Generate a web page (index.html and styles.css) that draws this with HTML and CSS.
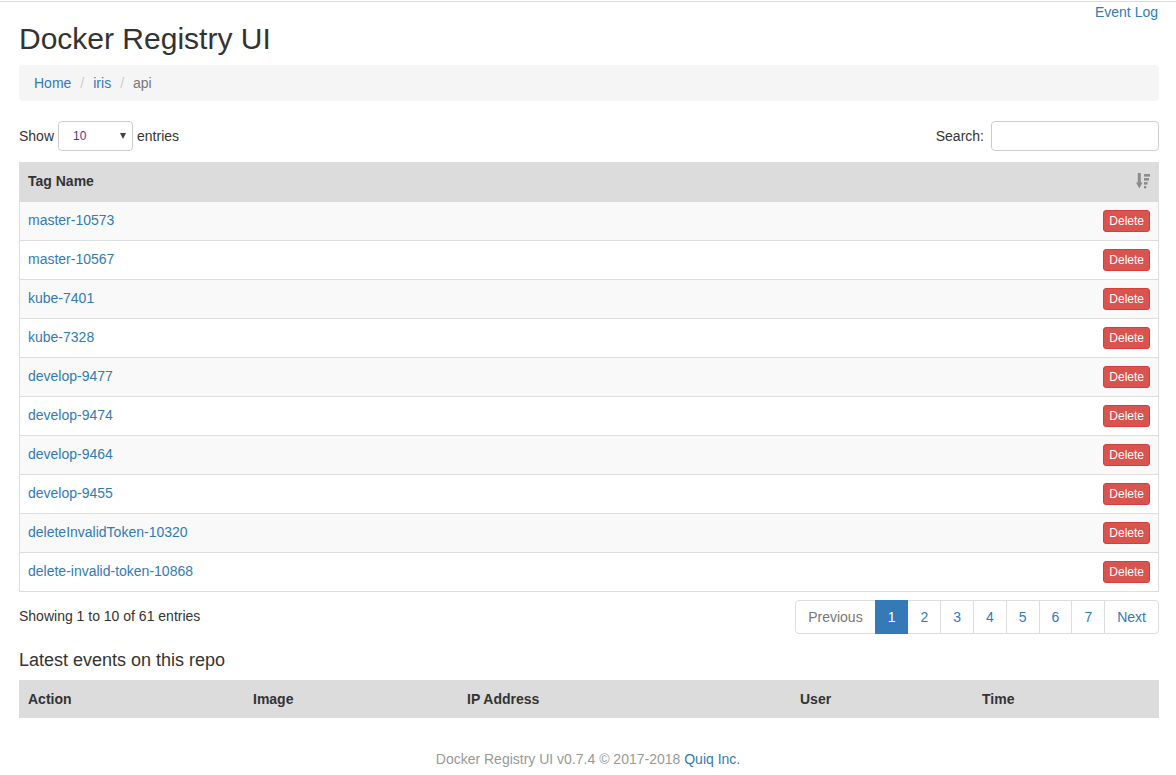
FILE: index.html
```html
<!DOCTYPE html>
<html>
<head>
<meta charset="utf-8">
<title>Docker Registry UI</title>
<link rel="stylesheet" href="styles.css">
</head>
<body>
<div class="topline"></div>
<div class="page">
  <div class="topbar"><a href="#">Event Log</a></div>
  <h2 class="title">Docker Registry UI</h2>
  <ol class="breadcrumb">
    <li><a href="#">Home</a></li>
    <li class="sep">/</li>
    <li><a href="#">iris</a></li>
    <li class="sep">/</li>
    <li class="active">api</li>
  </ol>

  <div class="controls">
    <div class="length">
      <span>Show</span>
      <div class="select"><span class="select-val">10</span><span class="caret"></span></div>
      <span>entries</span>
    </div>
    <div class="search">
      <span>Search:</span>
      <input class="search-input" type="text">
    </div>
  </div>

  <table class="tags">
    <thead>
      <tr><th class="sort-th">Tag Name
        <svg class="sort-icon" width="14" height="16" viewBox="0 0 14 16">
          <rect x="1.8" y="0" width="3" height="10.5" fill="#8c8c8c"/>
          <polygon points="0,9.5 6.6,9.5 3.3,15.5" fill="#8c8c8c"/>
          <rect x="8" y="1" width="6" height="2.6" fill="#8c8c8c"/>
          <rect x="8" y="5" width="5" height="2.6" fill="#8c8c8c"/>
          <rect x="8" y="9" width="3.5" height="2.6" fill="#8c8c8c"/>
          <rect x="8" y="13" width="2.2" height="2.4" fill="#8c8c8c"/>
        </svg>
      </th></tr>
    </thead>
    <tbody>
      <tr class="odd"><td><a href="#">master-10573</a><button class="btn-del">Delete</button></td></tr>
      <tr><td><a href="#">master-10567</a><button class="btn-del">Delete</button></td></tr>
      <tr class="odd"><td><a href="#">kube-7401</a><button class="btn-del">Delete</button></td></tr>
      <tr><td><a href="#">kube-7328</a><button class="btn-del">Delete</button></td></tr>
      <tr class="odd"><td><a href="#">develop-9477</a><button class="btn-del">Delete</button></td></tr>
      <tr><td><a href="#">develop-9474</a><button class="btn-del">Delete</button></td></tr>
      <tr class="odd"><td><a href="#">develop-9464</a><button class="btn-del">Delete</button></td></tr>
      <tr><td><a href="#">develop-9455</a><button class="btn-del">Delete</button></td></tr>
      <tr class="odd"><td><a href="#">deleteInvalidToken-10320</a><button class="btn-del">Delete</button></td></tr>
      <tr><td><a href="#">delete-invalid-token-10868</a><button class="btn-del">Delete</button></td></tr>
    </tbody>
  </table>

  <div class="tablefoot">
    <div class="info">Showing 1 to 10 of 61 entries</div>
    <ul class="pagination">
      <li class="disabled"><a href="#">Previous</a></li>
      <li class="active"><a href="#">1</a></li>
      <li><a href="#">2</a></li>
      <li><a href="#">3</a></li>
      <li><a href="#">4</a></li>
      <li><a href="#">5</a></li>
      <li><a href="#">6</a></li>
      <li><a href="#">7</a></li>
      <li><a href="#">Next</a></li>
    </ul>
  </div>

  <h4 class="events-title">Latest events on this repo</h4>
  <table class="events">
    <thead>
      <tr>
        <th class="c-action">Action</th>
        <th class="c-image">Image</th>
        <th class="c-ip">IP Address</th>
        <th class="c-user">User</th>
        <th class="c-time">Time</th>
      </tr>
    </thead>
  </table>
</div>
<footer class="footer">Docker Registry UI v0.7.4 © 2017-2018 <a href="#">Quiq Inc.</a></footer>
</body>
</html>
```

FILE: styles.css
```css
* { box-sizing: border-box; }
html, body { margin: 0; padding: 0; }
body {
  font-family: "Liberation Sans", Arial, sans-serif;
  font-size: 14px;
  line-height: 20px;
  color: #333;
  background: #fff;
}
a { color: #337ab7; text-decoration: none; }

.topline { height: 1px; margin-top: 1px; background: #dcdcdc; }

.page { padding: 0 17px 0 19px; }

.topbar { text-align: right; height: 20px; padding-right: 1px; }

.title {
  font-size: 30px;
  font-weight: 500;
  line-height: 33px;
  margin: 0 0 10px;
  color: #333;
}

.breadcrumb {
  list-style: none;
  margin: 0 0 20px;
  padding: 8px 15px;
  background: #f5f5f5;
  border-radius: 4px;
  display: flex;
  height: 36px;
}
.breadcrumb li { display: block; }
.breadcrumb .sep { color: #ccc; padding: 0 9px 0 9px; }
.breadcrumb .active { color: #777; }

.controls {
  display: flex;
  justify-content: space-between;
  align-items: center;
  height: 30px;
  margin-bottom: 11px;
}
.length { display: flex; align-items: center; }
.select {
  width: 75px;
  height: 30px;
  margin: 0 4px 0 4px;
  border: 1px solid #ccc;
  border-radius: 4px;
  display: flex;
  align-items: center;
  justify-content: space-between;
  padding: 0 6px 0 14px;
  font-size: 12px;
  color: #555;
}
.select-val { color: #55357a; }
.caret {
  width: 0; height: 0;
  border-left: 3.5px solid transparent;
  border-right: 3.5px solid transparent;
  border-top: 6px solid #444;
}
.search { display: flex; align-items: center; }
.search-input {
  width: 168px;
  height: 30px;
  margin-left: 7px;
  border: 1px solid #ccc;
  border-radius: 4px;
  font: inherit;
}

table { width: 100%; border-collapse: collapse; }

.tags { border: 1px solid #ddd; margin-bottom: 6px; }
.tags th {
  background: #dcdcdc;
  text-align: left;
  font-weight: bold;
  padding: 8px 8px;
  border-bottom: 2px solid #dcdcdc;
  height: 38px;
  position: relative;
}
.sort-icon { position: absolute; right: 8px; top: 10px; }
.tags td {
  padding: 8px;
  border-top: 1px solid #ddd;
  height: 39px;
  vertical-align: top;
}
.tags tr.odd td { background: #f9f9f9; }
.tags td a { display: inline-block; }

.btn-del {
  float: right;
  font-family: "Liberation Sans", Arial, sans-serif;
  font-size: 12px;
  line-height: 18px;
  height: 22px;
  padding: 1px 5px;
  color: #fff;
  background: #d9534f;
  border: 1px solid #d43f3a;
  border-radius: 3px;
  cursor: pointer;
}

.tablefoot {
  display: flex;
  justify-content: space-between;
  align-items: flex-start;
}
.info { padding-top: 8px; }
.pagination {
  display: flex;
  list-style: none;
  margin: 2px 0 0;
  padding: 0;
}
.pagination li a {
  display: block;
  padding: 6px 12px;
  line-height: 20px;
  border: 1px solid #ddd;
  margin-left: -1px;
  color: #337ab7;
  background: #fff;
}
.pagination li:first-child a { margin-left: 0; border-radius: 4px 0 0 4px; }
.pagination li:last-child a { border-radius: 0 4px 4px 0; }
.pagination li.disabled a { color: #777; }
.pagination li.active a { background: #337ab7; border-color: #337ab7; color: #fff; position: relative; z-index: 2; }

.events-title {
  font-size: 18px;
  font-weight: 500;
  line-height: 20px;
  margin: 16px 0 10px;
}
.events th {
  background: #dcdcdc;
  text-align: left;
  font-weight: bold;
  padding: 8px 9px;
  height: 38px;
}
.c-action { width: 225px; }
.c-image { width: 214px; }
.c-ip { width: 333px; }
.c-user { width: 182px; }

.footer {
  text-align: center;
  color: #999;
  margin-top: 31px;
}
```
